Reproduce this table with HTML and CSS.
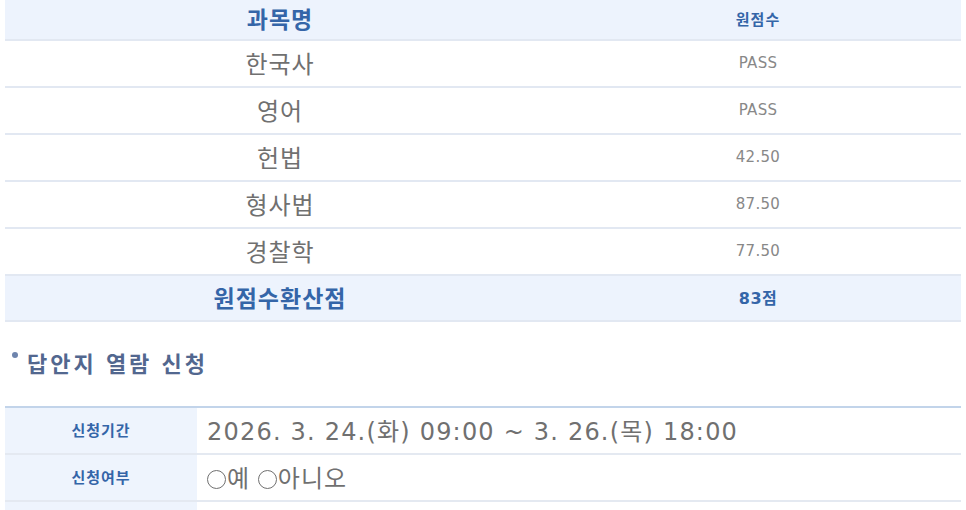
FILE: index.html
```html
<!DOCTYPE html>
<html lang="ko">
<head>
<meta charset="utf-8">
<link rel="stylesheet" href="styles.css">
</head>
<body>
<div class="page">
  <table class="score">
    <tr class="head">
      <th class="c1">과목명</th>
      <th class="c2">원점수</th>
    </tr>
    <tr><td class="c1">한국사</td><td class="c2">PASS</td></tr>
    <tr><td class="c1">영어</td><td class="c2">PASS</td></tr>
    <tr><td class="c1">헌법</td><td class="c2">42.50</td></tr>
    <tr><td class="c1">형사법</td><td class="c2">87.50</td></tr>
    <tr><td class="c1">경찰학</td><td class="c2">77.50</td></tr>
    <tr class="total">
      <th class="c1">원점수환산점</th>
      <th class="c2">83점</th>
    </tr>
  </table>

  <h2 class="section"><span class="dot"></span>답안지 열람 신청</h2>

  <table class="apply">
    <tr>
      <th>신청기간</th>
      <td class="date">2026. 3. 24.(화) 09:00 ~ 3. 26.(목) 18:00</td>
    </tr>
    <tr>
      <th>신청여부</th>
      <td class="choice"><span class="radio"></span>예 <span class="radio"></span>아니오</td>
    </tr>
    <tr>
      <th></th>
      <td></td>
    </tr>
  </table>
</div>
</body>
</html>
```

FILE: styles.css
```css
html, body {
  margin: 0;
  padding: 0;
  background: #ffffff;
}
body {
  font-family: "Noto Sans CJK KR", "Noto Sans", sans-serif;
  overflow: hidden;
  height: 510px;
}
.page {
  padding: 0 5px;
  width: 956px;
}
table {
  border-collapse: collapse;
  width: 956px;
  table-layout: fixed;
}
.score .c1 { width: 550px; }
.score td, .score th {
  text-align: center;
  height: 43px;
  padding: 0 0 2px;
  border-bottom: 2px solid #e2e8f2;
}
.score td.c1 {
  font-size: 24px;
  font-weight: 400;
  color: #707070;
  letter-spacing: 1px;
}
.score td.c2 {
  font-family: "DejaVu Sans", "Noto Sans CJK KR", sans-serif;
  font-size: 15px;
  color: #888888;
  letter-spacing: 0.3px;
}
.score .head th {
  height: 36px;
  padding: 0 0 3px;
  background: #edf3fd;
}
.score th {
  color: #3465a8;
  font-weight: 700;
}
.score th.c1 { font-size: 23px; letter-spacing: 1px; }
.score th.c2 { font-size: 15px; letter-spacing: 1px; }
.score .total th {
  background: #edf3fd;
  height: 42px;
}
.score .total th.c1 { font-size: 23px; letter-spacing: 1px; }
.score .total th.c2 {
  font-size: 16px;
  letter-spacing: 0.5px;
}
.score .total .c2 {
  font-family: "DejaVu Sans", "Noto Sans CJK KR", sans-serif;
  font-weight: 700;
}

.section {
  margin: 0;
  height: 84px;
  display: flex;
  align-items: center;
  font-size: 22px;
  font-weight: 700;
  color: #52678f;
  letter-spacing: 3px;
  padding-left: 7px;
  transform: translateY(-2px);
}
.section .dot {
  width: 6px;
  height: 6px;
  border-radius: 50%;
  background: #6e84ad;
  margin-right: 9px;
  align-self: center;
  transform: translateY(-7px);
}
.apply {
  border-top: 2px solid #c2d4ea;
}
.apply th {
  width: 192px;
  background: #eef4fd;
  color: #3465a8;
  font-size: 15px;
  font-weight: 700;
  letter-spacing: 1px;
  height: 43px;
  padding: 0 0 2px;
  border-bottom: 2px solid #e4e9f1;
}
.apply td {
  padding: 0 0 3px 10px;
  height: 42px;
  border-bottom: 2px solid #e4e9f1;
  color: #707070;
}
.apply td.date {
  font-family: "DejaVu Sans", "Noto Sans CJK KR", sans-serif;
  font-size: 24px;
  letter-spacing: 1.2px;
}
.apply td.choice {
  font-size: 24px;
  letter-spacing: 1px;
}
.radio {
  display: inline-block;
  width: 19px;
  height: 19px;
  border: 1.5px solid #707070;
  border-radius: 50%;
  box-sizing: border-box;
  vertical-align: -2px;
  margin-right: 1px;
}
```
